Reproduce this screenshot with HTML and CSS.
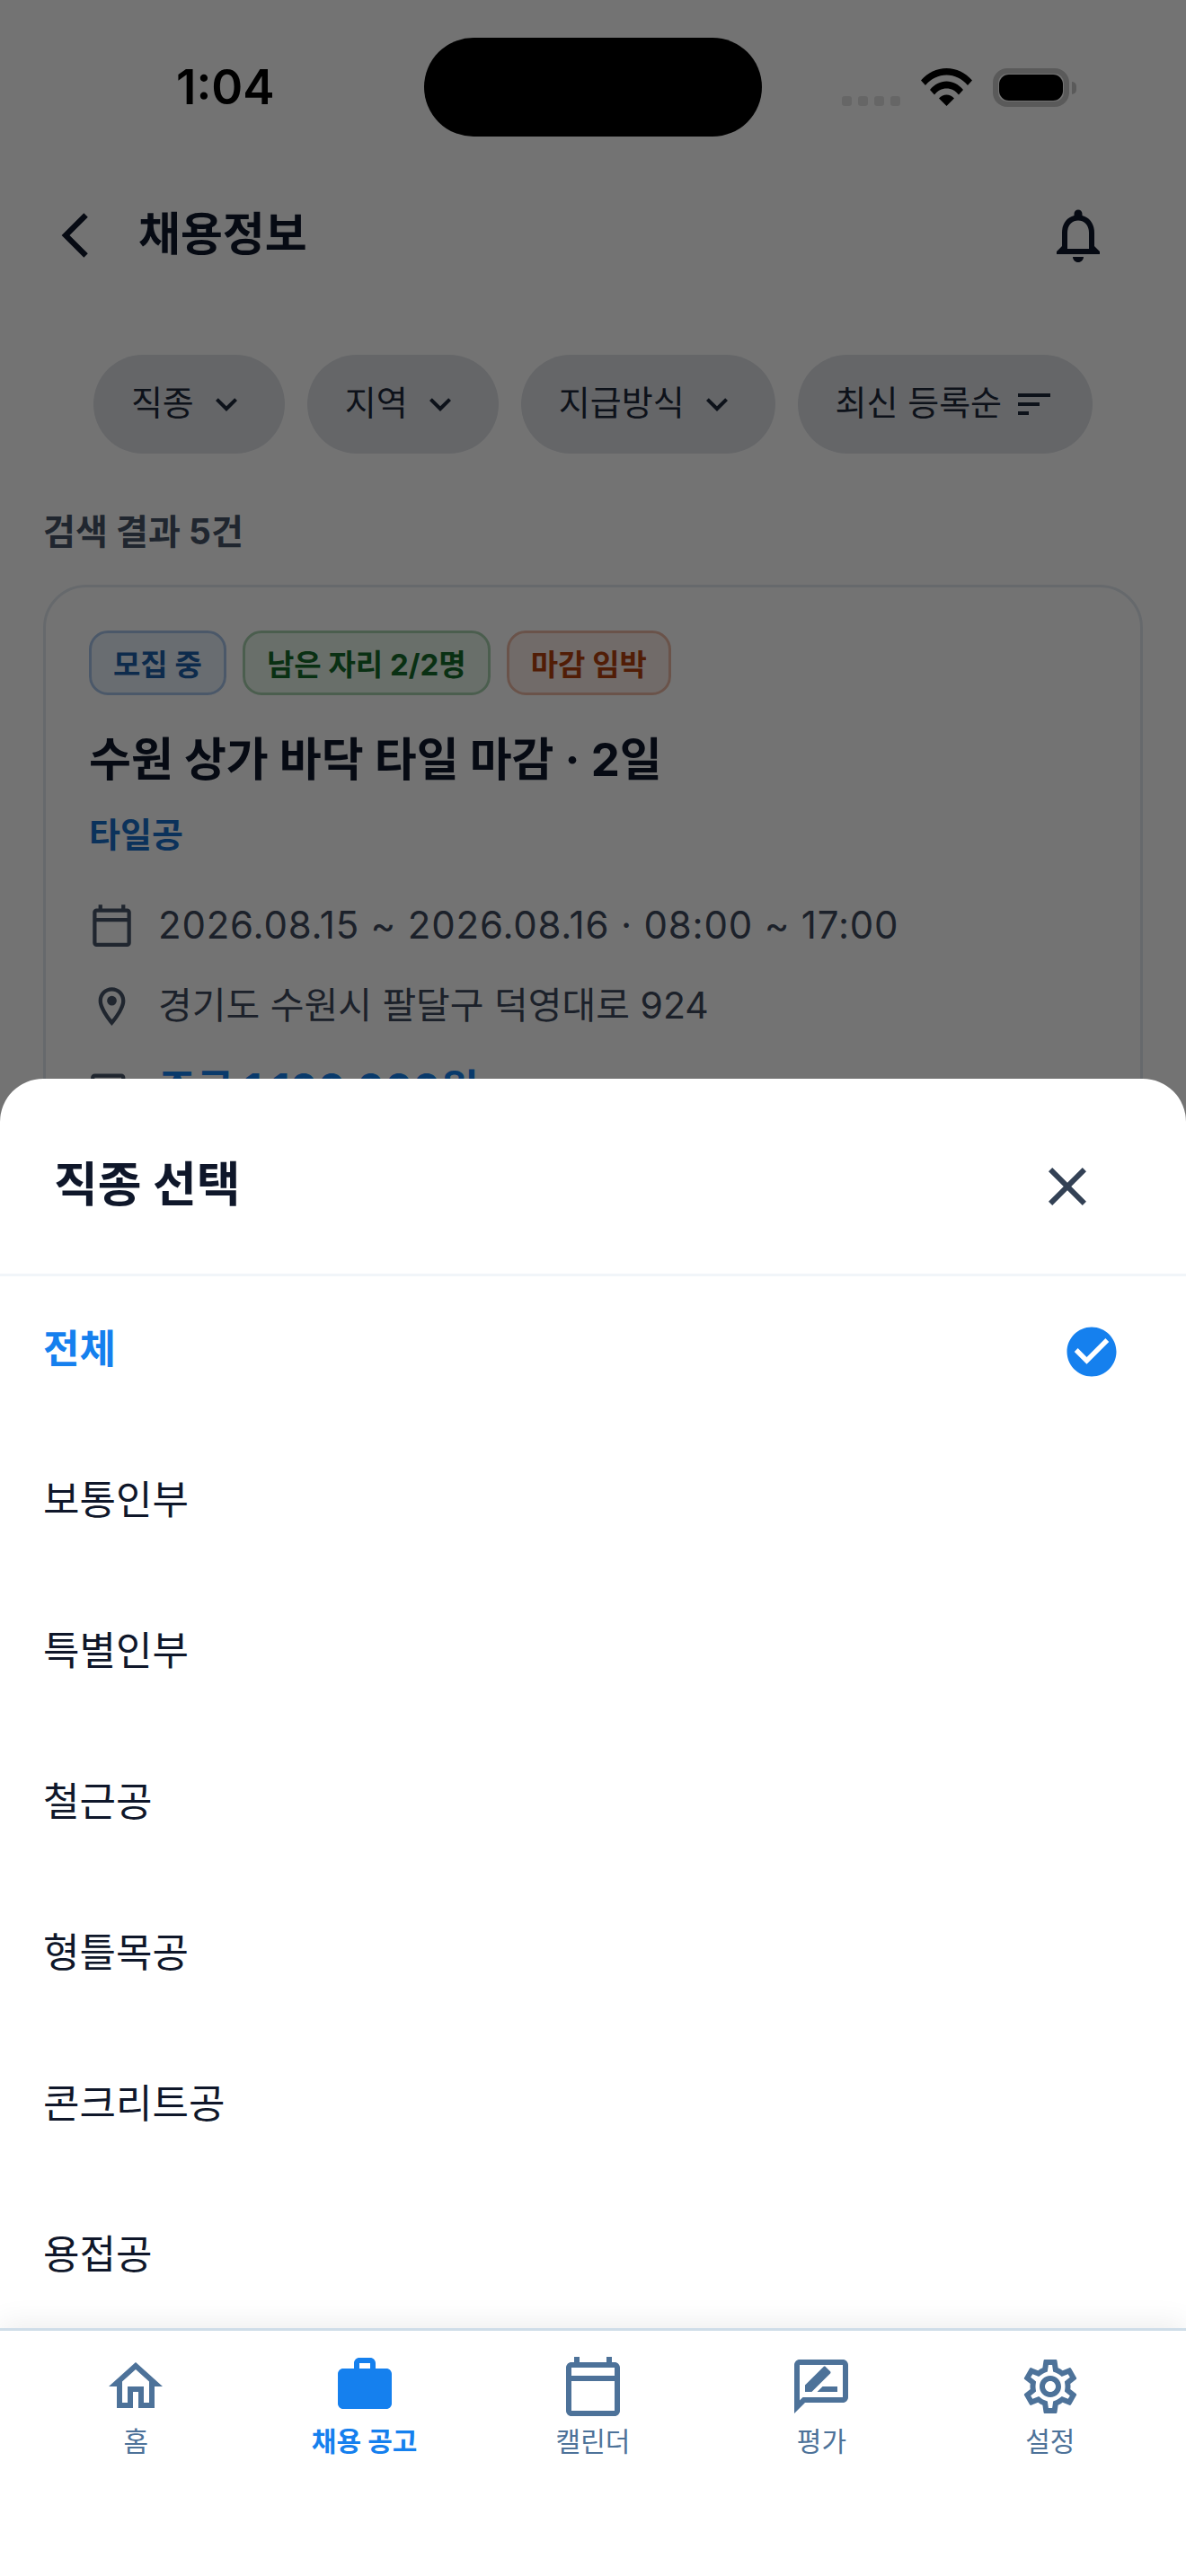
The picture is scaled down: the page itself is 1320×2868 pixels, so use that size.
FILE: index.html
```html
<!DOCTYPE html>
<html lang="ko">
<head>
<meta charset="utf-8">
<title>채용정보</title>
<link rel="stylesheet" href="styles.css">
</head>
<body>
<div class="screen">
  <div class="status">
    <span class="time">1:04</span>
    <div class="island"></div>
    <div class="status-icons">
      <div class="dots"><i></i><i></i><i></i><i></i></div>
      <svg class="wifi" viewBox="0 0 57 42"><path d="M0 13.500C7.500 4.800 17.500 0 28.500 0S49.500 4.800 57 13.500L52 19C45.500 11.500 37.500 7.500 28.500 7.500S11.500 11.500 5 19Z"/><path d="M10 24C15 18 21.500 14.500 28.500 14.500S42 18 47 24L42 29.500C38.500 25 33.800 22.500 28.500 22.500S18.500 25 15 29.500Z"/><path d="M20 33.500C22.500 31 25.300 29.500 28.500 29.500S34.500 31 37 33.500L28.500 42Z"/></svg>
      <div class="battery"><div class="battery-fill"></div></div>
      <div class="battery-cap"></div>
    </div>
  </div>

  <header class="topbar">
    <svg class="back" viewBox="0 0 24 24"><path d="M17.51 3.87L15.730 2.100 5.840 12l9.900 9.900 1.770-1.770L9.380 12l8.130-8.130z"/></svg>
    <h1 class="page-title">채용정보</h1>
    <svg class="bell" viewBox="0 0 24 24"><path d="M12 22c1.100 0 2-.9 2-2h-4c0 1.100.9 2 2 2zm6-6v-5c0-3.070-1.630-5.640-4.500-6.320V4c0-.83-.67-1.500-1.500-1.500s-1.500.67-1.500 1.500v.68C7.640 5.360 6 7.920 6 11v5l-2 2v1h16v-1l-2-2zm-2 1H8v-6c0-2.480 1.510-4.500 4-4.500s4 2.020 4 4.500v6z"/></svg>
  </header>

  <div class="chips">
    <div class="chip"><span>직종</span><svg viewBox="0 0 24 24"><path d="M7.410 8.590L12 13.170l4.590-4.580L18 10l-6 6-6-6 1.410-1.410z"/></svg></div>
    <div class="chip"><span>지역</span><svg viewBox="0 0 24 24"><path d="M7.410 8.590L12 13.170l4.590-4.580L18 10l-6 6-6-6 1.410-1.410z"/></svg></div>
    <div class="chip"><span>지급방식</span><svg viewBox="0 0 24 24"><path d="M7.410 8.590L12 13.170l4.590-4.580L18 10l-6 6-6-6 1.410-1.410z"/></svg></div>
    <div class="chip"><span>최신 등록순</span><svg viewBox="0 0 24 24"><path d="M3 18h6v-2H3v2zM3 6v2h18V6H3zm0 7h12v-2H3v2z"/></svg></div>
  </div>

  <p class="count">검색 결과 5건</p>

  <article class="card">
    <div class="badges">
      <span class="badge badge-blue">모집 중</span>
      <span class="badge badge-green">남은 자리 2/2명</span>
      <span class="badge badge-red">마감 임박</span>
    </div>
    <h2 class="job-title">수원 상가 바닥 타일 마감 · 2일</h2>
    <p class="job-type">타일공</p>
    <div class="info first">
      <svg viewBox="0 0 24 24"><path d="M20 3h-1V1h-2v2H7V1H5v2H4c-1.100 0-2 .9-2 2v16c0 1.100.9 2 2 2h16c1.100 0 2-.9 2-2V5c0-1.100-.9-2-2-2zm0 2v3H4V5h16zM4 21V10h16v11H4z"/></svg>
      <span class="date">2026.08.15 ~ 2026.08.16 · 08:00 ~ 17:00</span>
    </div>
    <div class="info">
      <svg viewBox="0 0 24 24"><path d="M12 2C8.130 2 5 5.130 5 9c0 5.250 7 13 7 13s7-7.750 7-13c0-3.870-3.130-7-7-7zM7 9c0-2.760 2.240-5 5-5s5 2.240 5 5c0 2.880-2.880 7.190-5 9.880C9.920 16.210 7 11.850 7 9z"/><circle cx="12" cy="9" r="2.500"/></svg>
      <span class="addr">경기도 수원시 팔달구 덕영대로 924</span>
    </div>
    <div class="info pay">
      <svg viewBox="0 0 24 24"><path d="M19 14V6c0-1.100-.9-2-2-2H3c-1.100 0-2 .9-2 2v8c0 1.100.9 2 2 2h14c1.100 0 2-.9 2-2zm-2 0H3V6h14v8zm-7-7c-1.660 0-3 1.340-3 3s1.340 3 3 3 3-1.340 3-3-1.340-3-3-3zm13 0v11c0 1.100-.9 2-2 2H4v-2h17V7h2z"/></svg>
      <span>주급 1,100,000원</span>
    </div>
  </article>

  <div class="scrim">
    <section class="sheet">
      <div class="sheet-head">
        <h3 class="sheet-title">직종 선택</h3>
        <svg class="close" viewBox="0 0 24 24"><path d="M19 6.410L17.590 5 12 10.590 6.410 5 5 6.410 10.590 12 5 17.590 6.410 19 12 13.410 17.590 19 19 17.590 13.410 12z"/></svg>
      </div>
      <ul class="options">
        <li class="option selected"><span>전체</span><svg viewBox="0 0 24 24"><path d="M12 2C6.480 2 2 6.480 2 12s4.480 10 10 10 10-4.480 10-10S17.520 2 12 2zm-2 15l-5-5 1.410-1.410L10 14.170l7.590-7.590L19 8l-9 9z"/></svg></li>
        <li class="option"><span>보통인부</span></li>
        <li class="option"><span>특별인부</span></li>
        <li class="option"><span>철근공</span></li>
        <li class="option"><span>형틀목공</span></li>
        <li class="option"><span>콘크리트공</span></li>
        <li class="option"><span>용접공</span></li>
      </ul>
    </section>
    <nav class="tabbar">
      <div class="tab">
        <svg viewBox="0 0 24 24"><path d="M12 5.690l5 4.500V18h-2v-6H9v6H7v-7.810l5-4.500M12 3L2 12h3v8h6v-6h2v6h6v-8h3L12 3z"/></svg>
        <span>홈</span>
      </div>
      <div class="tab active">
        <svg class="work" viewBox="0 0 24 24"><path d="M20 6h-4V4c0-1.110-.89-2-2-2h-4c-1.110 0-2 .89-2 2v2H4c-1.110 0-1.990.89-1.990 2L2 19c0 1.110.89 2 2 2h16c1.110 0 2-.89 2-2V8c0-1.110-.89-2-2-2zm-6 0h-4V4h4v2z"/></svg>
        <span>채용 공고</span>
      </div>
      <div class="tab">
        <svg viewBox="0 0 24 24"><path d="M20 3h-1V1h-2v2H7V1H5v2H4c-1.100 0-2 .9-2 2v16c0 1.100.9 2 2 2h16c1.100 0 2-.9 2-2V5c0-1.100-.9-2-2-2zm0 2v3H4V5h16zM4 21V10h16v11H4z"/></svg>
        <span>캘린더</span>
      </div>
      <div class="tab">
        <svg viewBox="0 0 24 24"><path d="M20 2H4c-1.100 0-1.990.9-1.990 2L2 22l4-4h14c1.100 0 2-.9 2-2V4c0-1.100-.9-2-2-2zm0 14H5.170L4 17.170V4h16v12z"/><path d="M6 14v-2.470l6.880-6.880c.2-.2.51-.2.71 0l1.770 1.770c.2.2.2.51 0 .71L8.470 14H6zM18 14h-7.500l2-2H18v2z"/></svg>
        <span>평가</span>
      </div>
      <div class="tab">
        <svg viewBox="0 0 24 24"><path d="M19.430 12.980c.04-.32.07-.64.07-.98 0-.34-.03-.66-.07-.98l2.110-1.650c.19-.15.24-.42.12-.64l-2-3.460c-.09-.16-.26-.25-.44-.25-.06 0-.12.01-.17.03l-2.490 1c-.52-.4-1.080-.73-1.690-.98l-.38-2.650C14.460 2.180 14.250 2 14 2h-4c-.25 0-.46.18-.49.42l-.38 2.650c-.61.25-1.170.59-1.690.98l-2.490-1c-.06-.02-.12-.03-.18-.03-.17 0-.34.09-.43.25l-2 3.460c-.13.22-.07.49.12.64l2.110 1.650c-.04.32-.07.65-.07.98 0 .33.03.66.07.98l-2.110 1.650c-.19.15-.24.42-.12.64l2 3.460c.09.16.26.25.44.25.06 0 .12-.01.17-.03l2.490-1c.52.4 1.080.73 1.690.98l.38 2.650c.03.24.24.42.49.42h4c.25 0 .46-.18.49-.42l.38-2.650c.61-.25 1.170-.59 1.690-.98l2.490 1c.06.02.12.03.18.03.17 0 .34-.09.43-.25l2-3.460c.12-.22.07-.49-.12-.64l-2.110-1.650zm-1.980-1.710c.04.31.05.52.05.73 0 .21-.02.43-.05.73l-.14 1.130.89.7 1.080.84-.7 1.210-1.270-.51-1.040-.42-.9.68c-.43.32-.84.56-1.250.73l-1.060.43-.16 1.130-.2 1.350h-1.400l-.19-1.350-.16-1.130-1.060-.43c-.43-.18-.83-.41-1.230-.71l-.91-.7-1.060.43-1.270.51-.7-1.210 1.080-.84.89-.7-.14-1.130c-.03-.31-.05-.54-.05-.74s.02-.43.05-.73l.14-1.130-.89-.7-1.080-.84.7-1.210 1.270.51 1.040.42.9-.68c.43-.32.84-.56 1.250-.73l1.060-.43.16-1.130.2-1.350h1.390l.19 1.350.16 1.130 1.060.43c.43.18.83.41 1.230.71l.91.7 1.060-.43 1.270-.51.7 1.210-1.070.85-.89.7.14 1.130zM12 8c-2.210 0-4 1.790-4 4s1.790 4 4 4 4-1.790 4-4-1.790-4-4-4zm0 6c-1.100 0-2-.9-2-2s.9-2 2-2 2 .9 2 2-.9 2-2 2z"/></svg>
        <span>설정</span>
      </div>
    </nav>
  </div>
</div>
</body>
</html>
```
FILE: styles.css
```css
* { box-sizing: border-box; }
html, body { margin: 0; padding: 0; }
body { background: #fff; font-family: "Inter", "Noto Sans CJK KR", sans-serif; color: #0f172a; }
h1, h2, h3, p, ul { margin: 0; padding: 0; }
svg { display: block; flex: none; fill: currentColor; }

.screen { position: relative; width: 1320px; height: 2868px; overflow: hidden; background: #fff; }

/* status bar */
.status { height: 194px; display: flex; align-items: center; padding-left: 196px; }
.time { width: 276px; font-size: 53px; font-weight: 600; color: #000; line-height: 60px; }
.island { width: 376px; height: 110px; border-radius: 55px; background: #000; position: relative; z-index: 5; }
.status-icons { display: flex; align-items: flex-end; margin-left: 89px; height: 43px; }
.dots { display: flex; gap: 7px; margin-bottom: 1px; }
.dots i { width: 11px; height: 11px; border-radius: 3px; background: #e3e3e3; }
.wifi { width: 57px; height: 42px; margin-left: 23px; color: #000; margin-bottom: 1px; }
.battery { width: 85px; height: 43px; margin-left: 23px; border: 6px solid #c8c8c8; border-radius: 16px; padding: 1px; }
.battery-fill { width: 100%; height: 100%; background: #000; border-radius: 11px; }
.battery-cap { width: 5px; height: 14px; margin: 0 0 14px 3px; background: #c8c8c8; border-radius: 0 6px 6px 0; }

/* header */
.topbar { height: 72px; margin-top: 32px; display: flex; align-items: center; padding: 0 84px 0 54px; color: #0f172a; }
.back { width: 60px; height: 60px; }
.page-title { font-size: 51px; font-weight: 700; line-height: 72px; margin-left: 40px; margin-top: -3px; }
.bell { width: 72px; height: 72px; margin-left: auto; }

/* chips */
.chips { display: flex; justify-content: center; gap: 25px; margin-top: 97px; }
.chip { height: 110px; display: flex; align-items: center; gap: 12px; padding: 0 41px 0 42px; border-radius: 55px; background: #dfe2e7; color: #1e293b; font-size: 38px; }
.chip span { margin-top: -10px; }
.chip svg { width: 48px; height: 48px; }

.count { height: 146px; padding-top: 60px; padding-left: 48px; font-size: 39px; line-height: 54px; font-weight: 700; color: #475569; }

/* job card */
.card { margin: 0 48px; height: 760px; padding: 48px; border: 3px solid #e2e8f0; border-radius: 48px; background: #fff; }
.badges { display: flex; gap: 18px; }
.badge { height: 72px; display: flex; align-items: center; padding: 0 24px; border-radius: 21px; border: 3px solid; font-size: 33px; font-weight: 700; }
.badge-blue { background: #e8f1fb; border-color: #a6c4e8; color: #1d5fa8; }
.badge-green { background: #e8f5ea; border-color: #a6d0ae; color: #156b2b; }
.badge-red { background: #fbeee8; border-color: #ecb8a4; color: #b3400f; }
.job-title { margin-top: 36px; font-size: 51px; line-height: 72px; font-weight: 700; color: #0f172a; }
.job-type { margin-top: 20px; font-size: 38px; line-height: 54px; font-weight: 700; color: #1a6fc9; }
.info { display: flex; align-items: center; gap: 26px; height: 60px; margin-top: 30px; font-size: 42px; color: #3f4b5e; }
.info.first { margin-top: 44px; }
.info svg { width: 51px; height: 51px; color: #475569; }
.info span { line-height: 60px; white-space: nowrap; }
.info .date { letter-spacing: 0.8px; }
.info .addr { font-size: 41px; margin-top: -2px; }
.info.pay { margin-top: 32px; }
.info.pay span { font-weight: 700; font-size: 46px; color: #1580ee; }

/* overlay */
.scrim { position: absolute; inset: 0; display: flex; flex-direction: column; justify-content: flex-end; background: rgba(0, 0, 0, 0.55); z-index: 2; }
.sheet { height: 1391px; background: #fff; border-radius: 48px 48px 0 0; overflow: hidden; }
.sheet-head { height: 220px; padding: 22px 96px 0 60px; display: flex; align-items: center; justify-content: space-between; border-bottom: 3px solid #f1f5f9; }
.sheet-title { font-size: 53px; line-height: 72px; font-weight: 700; color: #0f172a; margin-top: -4px; }
.close { width: 72px; height: 72px; color: #334155; }
.options { list-style: none; }
.option { height: 168px; display: flex; align-items: center; justify-content: space-between; padding: 0 72px 0 48px; font-size: 44px; color: #0f172a; }
.option span { margin-top: -12px; }
.option svg { width: 66px; height: 66px; color: #1580ee; }
.selected { color: #1580ee; font-weight: 700; }

/* bottom tabs */
.tabbar { position: relative; height: 276px; padding: 26px 24px 0; display: grid; grid-template-columns: repeat(5, 1fr); align-items: start; border-top: 3px solid #cfdde8; background: #fff; box-shadow: 0 -6px 30px rgba(0, 0, 0, 0.07); }
.tab { display: flex; flex-direction: column; align-items: center; color: #4d7299; font-size: 30px; line-height: 42px; }
.tab svg { width: 72px; height: 72px; }
.tab span { margin-top: 4px; }
.tab .work { margin-top: -2px; margin-bottom: 2px; }
.tab.active { color: #1580ee; font-weight: 700; }
```
